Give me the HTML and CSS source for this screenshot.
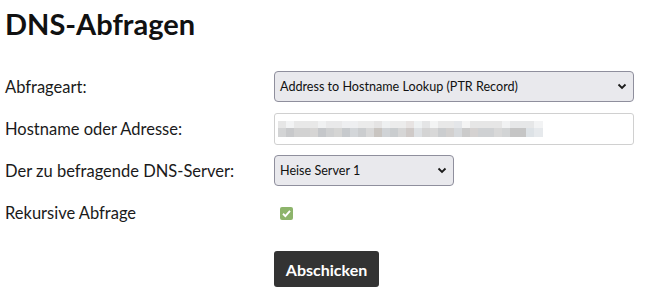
FILE: index.html
```html
<!DOCTYPE html>
<html lang="de">
<head>
<meta charset="utf-8">
<title>DNS-Abfragen</title>
<link rel="stylesheet" href="styles.css">
</head>
<body>
<main class="page">
  <h1 class="title">DNS-Abfragen</h1>
  <form class="form">
    <label class="label" for="art">Abfrageart:</label>
    <div class="control">
      <div class="select select-wide" id="art">
        <span class="select-text">Address to Hostname Lookup (PTR Record)</span>
        <svg class="chev" width="10" height="7" viewBox="0 0 10 7"><path d="M1.5 1.5 L5 5 L8.5 1.5" fill="none" stroke="#1b1b1b" stroke-width="1.8"/></svg>
      </div>
    </div>

    <label class="label" for="host">Hostname oder Adresse:</label>
    <div class="control">
      <div class="input" id="host">
        <div class="mosaic">
          <div class="mrow mrow-a"></div>
          <div class="mrow mrow-b"></div>
        </div>
      </div>
    </div>

    <label class="label" for="srv">Der zu befragende DNS-Server:</label>
    <div class="control">
      <div class="select select-narrow" id="srv">
        <span class="select-text">Heise Server 1</span>
        <svg class="chev" width="10" height="7" viewBox="0 0 10 7"><path d="M1.5 1.5 L5 5 L8.5 1.5" fill="none" stroke="#1b1b1b" stroke-width="1.8"/></svg>
      </div>
    </div>

    <span class="label">Rekursive Abfrage</span>
    <div class="control">
      <span class="checkbox">
        <svg width="13" height="13" viewBox="0 0 13 13"><path d="M3 6.8 L5.4 9.1 L10 3.9" fill="none" stroke="#fff" stroke-width="1.9"/></svg>
      </span>
    </div>

    <span class="label"></span>
    <div class="control control-btn">
      <button type="button" class="btn">Abschicken</button>
    </div>
  </form>
</main>
</body>
</html>
```

FILE: styles.css
```css
html, body {
  margin: 0;
  padding: 0;
  background: #fff;
}
body {
  font-family: "Lato", "Noto Sans", sans-serif;
  color: #1a1a1a;
}
.page {
  padding: 0 5px 21px;
}
.title {
  margin: 0;
  padding-top: 6px;
  font-size: 29px;
  font-weight: 700;
  line-height: 36px;
  color: #111;
}
.form {
  margin-top: 29px;
  display: grid;
  grid-template-columns: 269px 360px;
  grid-template-rows: repeat(4, 42px) auto;
  align-items: start;
}
.label {
  font-size: 16.5px;
  line-height: 32px;
}
.control {
  display: flex;
  align-items: center;
  min-height: 31px;
}
.select {
  box-sizing: border-box;
  height: 31px;
  border: 1px solid #8f8f9d;
  border-radius: 4px;
  background: #e9e9ed;
  display: flex;
  align-items: center;
  justify-content: space-between;
  padding: 0 6px 0 5px;
  font-size: 12.6px;
  color: #111;
}
.select-wide { width: 360px; }
.select-narrow { width: 180px; }
.input {
  box-sizing: border-box;
  width: 360px;
  height: 32px;
  border: 1px solid #d0d0d0;
  border-radius: 3px;
  background: #fff;
  display: flex;
  align-items: center;
  padding-left: 3px;
}
.mosaic {
  width: 265px;
  display: flex;
  flex-direction: column;
  margin-bottom: 1px;
}
.mrow-a {
  height: 7px;
  background: linear-gradient(90deg,
    #e6e6e6 0 8px, #f2f3f4 8px 16px, #e8e8e8 16px 40px, #f0f1f2 40px 48px, #e9e9ea 48px 64px,
    #eeeff1 64px 80px, #ebebeb 80px 96px, #e5e4e4 96px 104px, #eef0f1 104px 112px, #ececec 112px 128px,
    #e7e3e2 128px 136px, #eef1f2 136px 144px, #e4e5e6 144px 152px, #f3f4f4 152px 160px, #e8e8e8 160px 176px,
    #e4e6e9 176px 184px, #f4f4f4 184px 192px, #e6e6e6 192px 224px, #f1f2f3 224px 232px, #e6e7e8 232px 256px, #f2f3f4 256px 265px);
}
.mrow-b {
  height: 9px;
  background: linear-gradient(90deg,
    #d3d4d5 0 8px, #c8c9cb 8px 16px, #d2d2d2 16px 32px, #d6d5d4 32px 40px, #c5c7ca 40px 48px, #cfd0d1 48px 56px,
    #d5d5d4 56px 64px, #c7cacd 64px 72px, #d3d6d9 72px 80px, #cbcdcf 80px 88px, #d8d8d8 88px 96px, #c9c5c1 96px 104px,
    #d0d3d6 104px 112px, #cacdcf 112px 120px, #d6d6d6 120px 128px, #cfcac8 128px 136px, #dde0e3 136px 144px, #d4d4d4 144px 152px,
    #d8d8d8 152px 160px, #cbcdcf 160px 168px, #d2d0cf 168px 176px, #d6d9dc 176px 184px, #cbcbcb 184px 192px, #d5d2d1 192px 200px,
    #cfd1d3 200px 216px, #d8d8d8 216px 224px, #d2d4d5 224px 232px, #c5c5c5 232px 248px, #dde2e6 248px 256px, #e6e9ec 256px 265px);
}
.checkbox {
  margin-left: 6px;
  margin-top: 1px;
  width: 13px;
  height: 13px;
  border-radius: 2px;
  background: #8db46b;
  display: inline-flex;
}
.control-btn {
  padding-top: 12px;
}
.btn {
  height: 36px;
  width: 105px;
  border: 0;
  border-radius: 3px;
  background: #333333;
  color: #fff;
  font-family: inherit;
  font-size: 16px;
  font-weight: 700;
  padding: 0;
  cursor: pointer;
}
```
